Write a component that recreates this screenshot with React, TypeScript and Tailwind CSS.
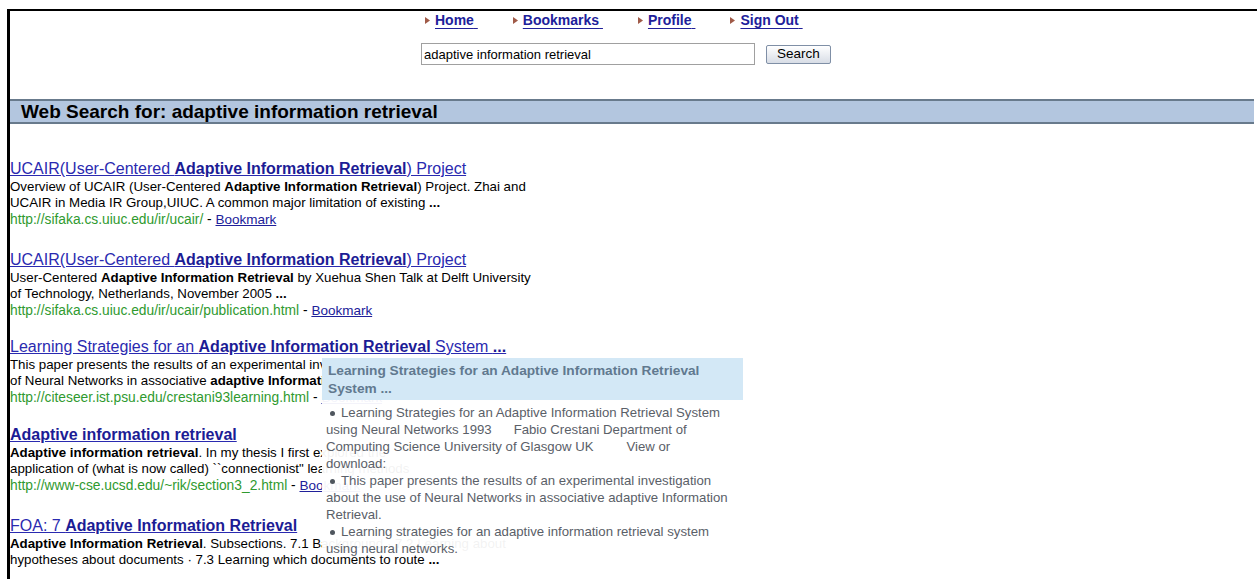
import React from 'react'

type Part = { t: string; b?: boolean }

interface Result {
  title: Part[]
  snippet: Part[]
  url: string
  gap: string
}

const results: Result[] = [
  {
    title: [{ t: 'UCAIR(User-Centered ' }, { t: 'Adaptive Information Retrieval', b: true }, { t: ') Project' }],
    snippet: [
      { t: 'Overview of UCAIR (User-Centered ' },
      { t: 'Adaptive Information Retrieval', b: true },
      { t: ') Project. Zhai and' },
      { t: '\nUCAIR in Media IR Group,UIUC. A common major limitation of existing ' },
      { t: '...', b: true },
    ],
    url: 'http://sifaka.cs.uiuc.edu/ir/ucair/',
    gap: 'mb-[21px]',
  },
  {
    title: [{ t: 'UCAIR(User-Centered ' }, { t: 'Adaptive Information Retrieval', b: true }, { t: ') Project' }],
    snippet: [
      { t: 'User-Centered ' },
      { t: 'Adaptive Information Retrieval', b: true },
      { t: ' by Xuehua Shen Talk at Delft University' },
      { t: '\nof Technology, Netherlands, November 2005 ' },
      { t: '...', b: true },
    ],
    url: 'http://sifaka.cs.uiuc.edu/ir/ucair/publication.html',
    gap: 'mb-[17px]',
  },
  {
    title: [{ t: 'Learning Strategies for an ' }, { t: 'Adaptive Information Retrieval', b: true }, { t: ' System ' }, { t: '...', b: true }],
    snippet: [
      { t: 'This paper presents the results of an experimental investigation about the use' },
      { t: '\nof Neural Networks in associative ' },
      { t: 'adaptive Information Retrieval', b: true },
      { t: '.' },
    ],
    url: 'http://citeseer.ist.psu.edu/crestani93learning.html',
    gap: 'mb-[18px]',
  },
  {
    title: [{ t: 'Adaptive information retrieval', b: true }],
    snippet: [
      { t: 'Adaptive information retrieval', b: true },
      { t: '. In my thesis I first explored the' },
      { t: '\napplication of (what is now called) ``connectionist" learning methods' },
    ],
    url: 'http://www-cse.ucsd.edu/~rik/section3_2.html',
    gap: 'mb-[21px]',
  },
  {
    title: [{ t: 'FOA: 7 ' }, { t: 'Adaptive Information Retrieval', b: true }],
    snippet: [
      { t: 'Adaptive Information Retrieval', b: true },
      { t: '. Subsections. 7.1 Background · 7.2 Learning about' },
      { t: '\nhypotheses about documents · 7.3 Learning which documents to route ' },
      { t: '...', b: true },
    ],
    url: '',
    gap: '',
  },
]

function Arrow() {
  return (
    <svg width="5" height="7" viewBox="0 0 5 7" className="mr-[5px] inline-block">
      <path d="M0 0 L5 3.5 L0 7 Z" fill="#a05a48" />
    </svg>
  )
}

function NavLink({ label }: { label: string }) {
  return (
    <span className="flex items-center">
      <Arrow />
      <a href="#" className="font-bold text-[14px] leading-[16px] text-[#20209a] underline underline-offset-[3px]">
        {label}&nbsp;
      </a>
    </span>
  )
}

function Dot() {
  return <span className="mr-[6px] ml-[4px] inline-block h-[5px] w-[5px] rounded-full bg-[#4f565e] align-middle" />
}

function Snippet({ parts }: { parts: Part[] }) {
  return (
    <p className="text-[13.3px] leading-[16px] text-black whitespace-pre">
      {parts.map((p, i) =>
        p.b ? <b key={i}>{p.t}</b> : <span key={i}>{p.t}</span>
      )}
    </p>
  )
}

function ResultItem({ r }: { r: Result }) {
  return (
    <div className={r.gap}>
      <a href="#" className="block text-[16px] leading-[21px] text-[#2a2ab0] underline decoration-[#2a2ab0]">
        {r.title.map((p, i) =>
          p.b ? (
            <b key={i} className="text-[#1c1c95]">{p.t}</b>
          ) : (
            <span key={i}>{p.t}</span>
          )
        )}
      </a>
      <Snippet parts={r.snippet} />
      {r.url && (
        <div className="text-[13.8px] leading-[17px] whitespace-nowrap">
          <span className="text-[#2f9a2f]">{r.url}</span>
          <span className="text-black"> - </span>
          <a href="#" className="text-[13.5px] text-[#20209a] underline">Bookmark</a>
        </div>
      )}
    </div>
  )
}

// hover preview for the third hit
function Preview() {
  return (
    <div className="absolute left-[322px] top-[358px] h-[195px] w-[421px] bg-white/95 text-[13.2px] leading-[17px] text-[#5a6068] whitespace-nowrap">
      <div className="bg-[#d3e8f6] px-[6px] pt-[4px] pb-[2px] text-[13.7px] font-bold leading-[18px] text-[#61798f]">
        Learning Strategies for an Adaptive Information Retrieval
        <br />
        System ...
      </div>
      <ul className="px-[4px] pt-[4px]">
        <li>
          <Dot />Learning Strategies for an Adaptive Information Retrieval System
          <br />
          using Neural Networks 1993&nbsp;&nbsp;&nbsp;&nbsp;&nbsp; Fabio Crestani Department of
          <br />
          Computing Science University of Glasgow UK&nbsp;&nbsp;&nbsp;&nbsp;&nbsp;&nbsp;&nbsp;&nbsp; View or
          <br />
          download:
        </li>
        <li>
          <Dot />This paper presents the results of an experimental investigation
          <br />
          about the use of Neural Networks in associative adaptive Information
          <br />
          Retrieval.
        </li>
        <li>
          <Dot />Learning strategies for an adaptive information retrieval system
          <br />
          using neural networks.
        </li>
      </ul>
    </div>
  )
}

export default function App() {
  return (
    <div className="relative h-[579px] w-[1257px] overflow-hidden bg-white pt-[9px] pl-[7px] font-['Liberation_Sans',Arial,sans-serif]">
      <div className="h-full border-t-2 border-l-[3px] border-black">
        {/* top navigation + search box */}
        <nav className="mt-[1px] flex gap-[35px] pl-[415px]">
          <NavLink label="Home" />
          <NavLink label="Bookmarks" />
          <NavLink label="Profile" />
          <NavLink label="Sign Out" />
        </nav>
        <div className="mt-[15px] flex items-center gap-[11px] pl-[411px]">
          <input
            readOnly
            value="adaptive information retrieval"
            className="h-[22px] w-[334px] border border-[#a0a0a0] px-[2px] text-[13px] text-black outline-none"
          />
          <button className="h-[19px] rounded-[2px] border border-[#7f8fa6] bg-gradient-to-b from-white to-[#d8dde6] px-[10px] text-[13.5px] leading-none text-black">
            Search
          </button>
        </div>

        {/* query heading */}
        <div className="mt-[34px] mr-[3px] h-[25px] border-y-2 border-[#687a8c] bg-[#b3c6df] pl-[11px] text-[19px] font-bold leading-[21px] text-black">
          Web Search for: adaptive information retrieval
        </div>

        <div className="pt-[34px]">
          {results.map((r, i) => (
            <ResultItem key={i} r={r} />
          ))}
        </div>
      </div>
      <Preview />
    </div>
  )
}
